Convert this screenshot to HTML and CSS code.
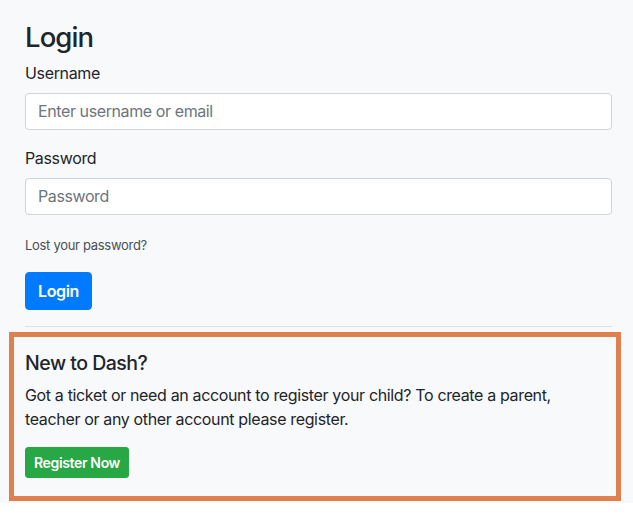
FILE: index.html
```html
<!DOCTYPE html>
<html lang="en">
<head>
<meta charset="utf-8">
<title>Login</title>
<link rel="stylesheet" href="styles.css">
</head>
<body>
<div class="panel">
  <h3 class="title">Login</h3>
  <form class="login-form">
    <div class="form-group">
      <label class="label" for="user">Username</label>
      <input class="input" id="user" type="text" placeholder="Enter username or email">
    </div>
    <div class="form-group">
      <label class="label" for="pass">Password</label>
      <input class="input" id="pass" type="password" placeholder="Password">
    </div>
    <p class="lost"><a class="lost-link" href="#">Lost your password?</a></p>
    <button class="btn btn-primary" type="button">Login</button>
  </form>
  <hr class="divider">
  <div class="register-box">
    <h5 class="register-title">New to Dash?</h5>
    <p class="register-text">Got a ticket or need an account to register your child? To create a parent, teacher or any other account please register.</p>
    <button class="btn btn-success btn-sm" type="button">Register Now</button>
  </div>
</div>
</body>
</html>
```

FILE: styles.css
```css
* { box-sizing: border-box; }

html, body {
  margin: 0;
  padding: 0;
  background: #ffffff;
}

body {
  font-family: Inter, "Liberation Sans", Arial, sans-serif;
  font-size: 16px;
  line-height: 24px;
  color: #212529;
  letter-spacing: -0.35px;
}

.panel {
  background: #f8f9fa;
  padding: 21px 21px 2px 25px;
}

.title {
  margin: 0 0 6px 0;
  font-size: 27.5px;
  line-height: 33.6px;
  font-weight: 500;
  letter-spacing: -0.9px;
}

.login-form {
  margin: 0;
}

.form-group {
  margin-bottom: 16px;
}

.label {
  display: block;
  margin-bottom: 8px;
  font-size: 16px;
  line-height: 24px;
}

.input {
  display: block;
  width: 100%;
  height: 37px;
  padding: 6px 12px;
  font-family: inherit;
  font-size: 16px;
  line-height: 24px;
  letter-spacing: -0.4px;
  color: #495057;
  background: #ffffff;
  border: 1px solid #ced4da;
  border-radius: 4px;
}

.input::placeholder {
  color: #6c757d;
  opacity: 1;
}

.lost {
  margin: 20px 0 16px 0;
  font-size: 13px;
  line-height: 21px;
  letter-spacing: -0.3px;
}

.lost-link {
  color: #495057;
  text-decoration: none;
}

.btn {
  display: inline-block;
  font-family: inherit;
  font-weight: 600;
  letter-spacing: -0.35px;
  border: 1px solid transparent;
  color: #ffffff;
  cursor: pointer;
}

.btn-primary {
  height: 38px;
  padding: 6px 12px;
  font-size: 16px;
  line-height: 24px;
  background: #007bff;
  border-color: #007bff;
  border-radius: 4px;
}

.btn-success {
  background: #28a745;
  border-color: #28a745;
}

.btn-sm {
  height: 31px;
  padding: 4px 8px;
  font-size: 14px;
  line-height: 21px;
  border-radius: 3px;
}

.divider {
  margin: 16px 0 0 0;
  border: 0;
  border-top: 1px solid rgba(0, 0, 0, 0.1);
}

.register-box {
  margin: 5px -9px 0 -16px;
  border: 5px solid #e0804f;
  padding: 14px 20px 18px 11px;
}

.register-title {
  margin: 0 0 8px 0;
  font-size: 19.5px;
  line-height: 24px;
  font-weight: 500;
  letter-spacing: -0.5px;
}

.register-text {
  margin: 0 0 16px 0;
  font-size: 16px;
  line-height: 24px;
}
```
